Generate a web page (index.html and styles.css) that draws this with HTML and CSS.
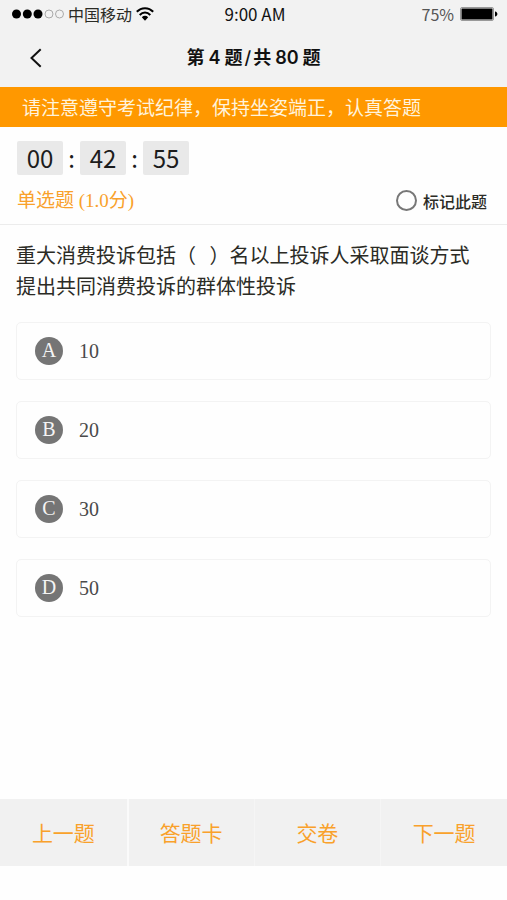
FILE: index.html
```html
<!DOCTYPE html>
<html lang="zh-CN">
<head>
<meta charset="utf-8">
<meta name="viewport" content="width=device-width, initial-scale=1">
<title>考试答题</title>
<link rel="stylesheet" href="styles.css">
</head>
<body>
<div class="app">
  <div class="status">
    <div class="carrier">
      <svg class="signal" width="52" height="10" viewBox="0 0 52 10" aria-hidden="true">
        <circle cx="4.5" cy="5" r="4.5"/><circle cx="15.3" cy="5" r="4.5"/><circle cx="26" cy="5" r="4.5"/>
        <circle class="off" cx="37" cy="5" r="4"/><circle class="off" cx="47.5" cy="5" r="4"/>
      </svg>
      <span>中国移动</span>
      <svg class="wifi" width="18" height="14" viewBox="0 0 18 14" aria-hidden="true">
        <path class="arc" d="M.8 4.8C5.4-.1 12.6-.1 17.2 4.8M3.7 8C6.9 4.7 11.1 4.7 14.3 8"/>
        <path d="M5.8 10.2C7.6 8.4 10.4 8.4 12.2 10.2L9 13.8Z"/>
      </svg>
    </div>
    <div class="clock">9:00 AM</div>
    <div class="power">
      <span>75%</span>
      <svg width="38" height="14" viewBox="0 0 38 14" aria-hidden="true">
        <rect class="shell" x=".5" y=".5" width="33" height="13" rx="1.5"/>
        <rect x="1.5" y="1.5" width="31" height="11" rx=".5"/>
        <path d="M35 4.5C38.2 5 38.2 9 35 9.5Z"/>
      </svg>
    </div>
  </div>
  <header class="bar">
    <button class="back" type="button" aria-label="返回">
      <svg width="12" height="20" viewBox="0 0 12 20" aria-hidden="true"><path d="M10.7 1.2 1.5 10l9.2 8.8"/></svg>
    </button>
    <h1>第<span class="num">4</span>题<span class="slash">/</span>共<span class="num">80</span>题</h1>
  </header>
  <p class="notice">请注意遵守考试纪律，保持坐姿端正，认真答题</p>
  <main>
    <section class="meta">
      <div class="timer"><span class="cell">00</span><span class="sep">:</span><span class="cell">42</span><span class="sep">:</span><span class="cell">55</span></div>
      <div class="kind">
        <span>单选题 (1.0分)</span>
        <label class="mark"><input type="checkbox">标记此题</label>
      </div>
    </section>
    <form class="question">
      <p class="stem">重大消费投诉包括（&nbsp;&nbsp;&nbsp;）名以上投诉人采取面谈方式提出共同消费投诉的群体性投诉</p>
      <div class="options">
        <label class="option"><input type="radio" name="answer"><span class="letter">A</span><span>10</span></label>
        <label class="option"><input type="radio" name="answer"><span class="letter">B</span><span>20</span></label>
        <label class="option"><input type="radio" name="answer"><span class="letter">C</span><span>30</span></label>
        <label class="option"><input type="radio" name="answer"><span class="letter">D</span><span>50</span></label>
      </div>
    </form>
  </main>
  <nav class="actions">
    <button type="button">上一题</button>
    <button type="button">答题卡</button>
    <button type="button">交卷</button>
    <button type="button">下一题</button>
  </nav>
</div>
</body>
</html>
```
FILE: styles.css
```css
* { box-sizing: border-box; }
body { margin: 0; background: #fefefe; color: #2b2b25; font-family: "Noto Sans CJK SC", sans-serif; }
h1, p { margin: 0; }
button { border: 0; padding: 0; background: none; font: inherit; cursor: pointer; }
svg { display: block; flex: none; }

.app { display: flex; flex-direction: column; min-height: 100vh; padding-bottom: 34px; }

.status { display: grid; grid-template-columns: 1fr auto 1fr; align-items: center; height: 27px; padding: 0 9px 0 12px; background: #f2f2f2; font-size: 16px; line-height: 24px; }
.carrier { display: flex; align-items: center; gap: 4px; }
.signal .off { fill: none; stroke: #aaa; stroke-width: 1; }
.wifi .arc { fill: none; stroke: #000; stroke-width: 2; }
.clock { color: #111; font-size: 17px; }
.power { display: flex; align-items: center; justify-content: flex-end; gap: 6px; color: #555; }
.shell { fill: none; stroke: #999; }

.bar { display: grid; grid-template-columns: 48px 1fr 48px; align-items: center; height: 60px; padding-top: 2px; background: #f2f2f2; }
.back { display: flex; justify-content: flex-end; padding: 0 6px; }
.back path { fill: none; stroke: #111; stroke-width: 2; }
h1 { color: #111; font-family: Inter, "Noto Sans CJK SC", sans-serif; font-size: 18px; line-height: 28px; font-weight: 700; text-align: center; }
.num { margin: 0 4px; font-weight: 600; }
.slash { margin: 0 2px; font-weight: 500; }

.notice { padding: 5px 22px; background: #ff9800; color: #fff3dc; font-size: 19px; line-height: 30px; }

main { flex: 1; }
.meta { padding: 14px 20px 8px 17px; border-bottom: 1px solid #ececec; }
.timer { display: flex; align-items: center; font-size: 24px; line-height: 34px; color: #1c1c1c; }
.cell { width: 46px; height: 34px; border-radius: 2px; background: #e9e9e9; text-align: center; }
.sep { width: 17px; text-align: center; }
.kind { display: flex; align-items: center; justify-content: space-between; margin-top: 10px; color: #f9a12b; font-family: "Liberation Serif", "Noto Sans CJK SC", serif; font-size: 19px; line-height: 31px; }
.mark { display: flex; align-items: center; gap: 6px; color: #2b2b25; font-family: "Noto Sans CJK SC", sans-serif; font-size: 16px; line-height: 26px; font-weight: 500; }
.mark input { appearance: none; width: 21px; height: 21px; margin: 0; border: 2px solid #777; border-radius: 50%; }
.mark input:checked { background: #ff9800; }

.question { padding: 14px 16px 24px; }
.stem { padding-right: 14px; font-size: 20px; line-height: 31px; }
.options { display: grid; gap: 21px; margin-top: 21px; }
.option { display: flex; align-items: center; min-height: 58px; padding: 0 18px; border: 1px solid #f3f3f3; border-radius: 5px; color: #4a4a4a; font-family: "Liberation Serif", serif; font-size: 20px; line-height: 26px; }
.option input { appearance: none; width: 0; height: 0; margin: 0; }
.letter { width: 28px; height: 28px; margin-right: 16px; border-radius: 50%; background: #757575; color: #f4f4f4; text-align: center; }
.option:has(:checked) .letter { background: #ff9800; }

.actions { display: grid; grid-template-columns: repeat(4, 1fr); background: #f1f1f1; }
.actions button { height: 67px; padding-bottom: 2px; color: #f9a12b; font-size: 21px; line-height: 30px; }
.actions button + button { border-left: 1px solid #f5f5f5; }
.actions button:nth-child(2) { border-left: 2px solid #fafafa; }
```
